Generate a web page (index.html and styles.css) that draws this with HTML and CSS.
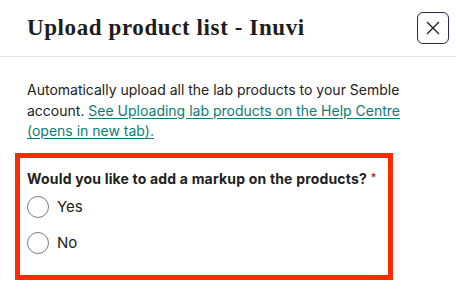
FILE: index.html
```html
<!DOCTYPE html>
<html lang="en">
<head>
<meta charset="utf-8">
<link rel="stylesheet" href="styles.css">
</head>
<body>
<div class="modal">
  <header class="modal-header">
    <h1 class="modal-title">Upload product list - Inuvi</h1>
    <button class="close-btn" aria-label="Close">
      <svg width="14" height="14" viewBox="0 0 14 14"><path d="M1.5 1.5 L12.5 12.5 M12.5 1.5 L1.5 12.5" stroke="#222" stroke-width="1.4" stroke-linecap="round" fill="none"/></svg>
    </button>
  </header>
  <div class="modal-body">
    <p class="intro">Automatically upload all the lab products to your Semble account. <a href="#" class="help-link">See Uploading lab products on the Help Centre (opens in new tab).</a></p>
    <div class="highlight">
      <div class="question">Would you like to add a markup on the products? <span class="req">*</span></div>
      <label class="radio-row"><span class="radio"></span><span class="radio-label">Yes</span></label>
      <label class="radio-row"><span class="radio"></span><span class="radio-label">No</span></label>
    </div>
  </div>
</div>
</body>
</html>
```

FILE: styles.css
```css
* { box-sizing: border-box; }
html, body { margin: 0; padding: 0; background: #fff; }
body { font-family: Inter, "Noto Sans", sans-serif; color: #1f1f1f; width: 456px; height: 299px; overflow: hidden; }

.modal-header {
  display: flex;
  align-items: center;
  justify-content: space-between;
  height: 57px;
  padding: 0 7px 0 27px;
  border-bottom: 1px solid #e4e4e4;
}
.modal-title {
  margin: 0;
  font-family: "Liberation Serif", serif;
  font-weight: 700;
  font-size: 23px;
  letter-spacing: 0.6px;
  color: #1d1d1d;
}
.close-btn {
  width: 32px;
  height: 32px;
  border: 1.2px solid #2b2456;
  border-radius: 6px;
  background: #fff;
  display: flex;
  align-items: center;
  justify-content: center;
  padding: 0;
  margin-bottom: 1px;
}

.modal-body { padding: 23px 0 0 27px; }
.intro {
  margin: 0;
  font-size: 14px;
  line-height: 20.5px;
  color: #222;
  width: 385px;
}
.help-link { color: #0b7d74; text-decoration: underline; text-underline-offset: 2px; }

.highlight {
  margin: 11px 0 0 -12px;
  width: 378px;
  border: 5px solid #ff2a00;
  padding: 9px 7px 14px;
}
.question {
  font-size: 14px;
  font-weight: 700;
  line-height: 20px;
  letter-spacing: 0.18px;
  color: #222;
}
.req { color: #d0232f; font-size: 11px; vertical-align: 3px; }
.radio-row {
  display: flex;
  align-items: center;
  gap: 8px;
  height: 36px;
}
.radio {
  width: 22px;
  height: 22px;
  border: 1px solid #7b7b7b;
  border-radius: 50%;
  background: #fff;
}
.radio-label { font-size: 15px; color: #222; }
```
